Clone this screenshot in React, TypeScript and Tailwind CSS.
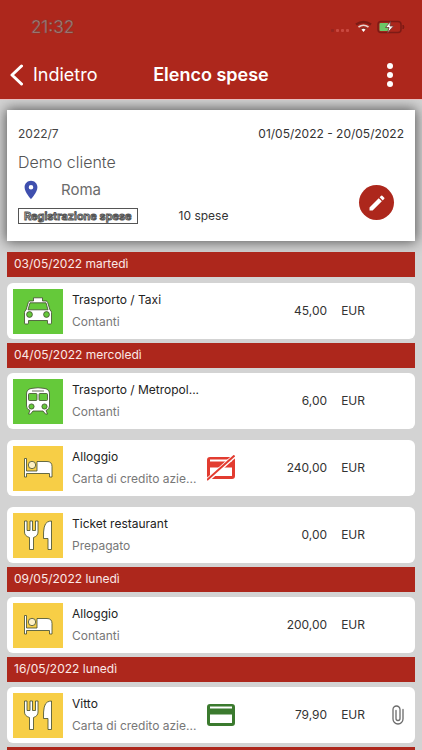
import React from 'react'
import { MdEdit, MdLocationOn } from 'react-icons/md'

type IconName = 'taxi' | 'train' | 'bed' | 'food'

type Expense = {
  icon: IconName
  title: string
  payment: string
  amount: string
  card?: 'ok' | 'off'
  attachment?: boolean
}

type Day = {
  date: string
  expenses: Expense[]
}

const days: Day[] = [
  {
    date: '03/05/2022 martedì',
    expenses: [{ icon: 'taxi', title: 'Trasporto / Taxi', payment: 'Contanti', amount: '45,00' }],
  },
  {
    date: '04/05/2022 mercoledì',
    expenses: [
      { icon: 'train', title: 'Trasporto / Metropol...', payment: 'Contanti', amount: '6,00' },
      { icon: 'bed', title: 'Alloggio', payment: 'Carta di credito azie...', amount: '240,00', card: 'off' },
      { icon: 'food', title: 'Ticket restaurant', payment: 'Prepagato', amount: '0,00' },
    ],
  },
  {
    date: '09/05/2022 lunedì',
    expenses: [{ icon: 'bed', title: 'Alloggio', payment: 'Contanti', amount: '200,00' }],
  },
  {
    date: '16/05/2022 lunedì',
    expenses: [
      { icon: 'food', title: 'Vitto', payment: 'Carta di credito azie...', amount: '79,90', card: 'ok', attachment: true },
    ],
  },
  { date: '', expenses: [] },
]

function CategoryIcon({ name }: { name: IconName }) {
  const green = name === 'taxi' || name === 'train'
  const hole = green ? '#65c93a' : '#f7ce46'
  return (
    <div className={`flex h-[45px] w-[50px] shrink-0 items-center justify-center ${green ? 'bg-[#65c93a]' : 'bg-[#f7ce46]'}`}>
      <svg width="30" height="30" viewBox="0 0 30 30" fill="#fff" stroke="#3f4a2c" strokeWidth="0.8" strokeLinejoin="round">
        {name === 'taxi' && (
          <>
            <path d="M10.500 5V1.800h9V5H23q1.200 0 1.600 1.200L27 14q1.500.8 1.500 2.500V27q0 1-1 1h-2q-1 0-1-1v-2.500h-19V27q0 1-1 1h-2q-1 0-1-1V16.500Q1.500 14.800 3 14L5.400 6.200Q5.800 5 7 5z" />
            <path d="M7 6.800h16l2 7H5z" fill={hole} />
            <circle cx="6.500" cy="18.500" r="2.900" fill={hole} />
            <circle cx="23.500" cy="18.500" r="2.900" fill={hole} />
          </>
        )}
        {name === 'train' && (
          <>
            <path d="M3.500 8q0-4.500 4.500-5.500 7-1.500 14 0 4.500 1 4.500 5.500v12q0 3.500-3.500 4.500l1.500 3.500h-2l-2.500-3h-10L7.500 28h-2L7 24.500q-3.500-1-3.500-4.500z" />
            <rect x="5.500" y="7.500" width="8.500" height="7" rx="1" fill={hole} />
            <rect x="16" y="7.500" width="8.500" height="7" rx="1" fill={hole} />
            <path d="M9 5h12" />
            <circle cx="8.500" cy="20.500" r="2.600" fill={hole} />
            <circle cx="21.500" cy="20.500" r="2.600" fill={hole} />
          </>
        )}
        {name === 'bed' && (
          <>
            <path d="M1.500 5.500h2V18H14V8.500h10q5 0 5 5v10.500h-2.500v-3.500h-23V24h-2z" />
            <circle cx="9" cy="12" r="3.700" fill="#fdf0c4" />
          </>
        )}
        {name === 'food' && (
          <>
            <path d="M1.500 1H4v9.500h3V1h2.500v9.500h3V1H15v11q0 4-4.500 5.500V29.500H6.500V17.500Q1.500 16 1.500 12z" />
            <path d="M28.500 1v28.500H25V18.500h-4.500Q20 4 24.500 2 26.500 1 28.500 1z" />
          </>
        )}
      </svg>
    </div>
  )
}

function CardIcon({ state }: { state: 'ok' | 'off' }) {
  const off = state === 'off'
  return (
    <svg width="28" height="26" viewBox="0 0 28 26" aria-label={off ? 'Carta non valida' : 'Carta'}>
      <path
        fill={off ? '#e23c30' : '#3b7a2e'}
        fillRule="evenodd"
        d="M3 2h22q3 0 3 3v16q0 3-3 3H3q-3 0-3-3V5q0-3 3-3zM3 4.500v2h22v-2zM3 12.500V21h22v-8.500z"
      />
      {off && (
        <>
          <path d="M0 25.500L28 .5" stroke="#fff" strokeWidth="4.200" />
          <path d="M0 25L27.500 .5" stroke="#e23c30" strokeWidth="2" />
        </>
      )}
    </svg>
  )
}

function StatusBar() {
  return (
    <div className="flex h-[50px] items-center justify-between pt-1 pr-[17px] pl-[31px]">
      <span className="text-[17px] leading-6 text-[#a98480] [-webkit-text-stroke:0.5px_#75453f]">21:32</span>
      <svg width="74" height="14" viewBox="0 0 74 14">
        <g fill="#c9483f">
          <rect x="0" y="9" width="3" height="3" rx="1" fill="#95251f" />
          <rect x="5" y="9" width="3" height="3" rx="1" />
          <rect x="10" y="9" width="3" height="3" rx="1" />
          <rect x="15" y="9" width="3" height="3" rx="1" />
        </g>
        <g fill="none">
          <path d="M25 4.500q7.500-5 15 0" stroke="#7d1b15" strokeWidth="2.500" />
          <path d="M27.500 7q5-3.500 10 0" stroke="#e5d5d2" strokeWidth="1.600" />
          <path d="M29.500 9q3-2 6 0" stroke="#6d3733" strokeWidth="1" />
        </g>
        <path d="M30.500 9.500q2-1.500 4 0l-2 2.500z" fill="#fff" />
        <rect x="47" y="1.500" width="23" height="11" rx="3" fill="none" stroke="#7d1b15" strokeWidth="1.500" />
        <rect x="48.500" y="3" width="9" height="8" rx="1" fill="#6cc867" />
        <path d="M72 5q2 2 0 4z" fill="#7d1b15" stroke="#7d1b15" />
        <path d="M59.500 1.500l-5 6h3.500L56.500 13l6-7H59z" fill="#fff" stroke="#6d3733" strokeWidth="0.800" />
      </svg>
    </div>
  )
}

function Header() {
  return (
    <header className="shrink-0 border-b border-[#e6bfc0] bg-[#ad271c] text-white">
      <StatusBar />
      <div className="grid h-[49px] grid-cols-[1fr_auto_1fr] items-center px-[10px]">
        <button className="flex items-center gap-[10px] text-lg">
          <svg width="13" height="22" viewBox="0 0 13 22" fill="none" stroke="#fff" strokeWidth="3" strokeLinecap="round" strokeLinejoin="round">
            <path d="M11.500 2L2 11l9.500 9" />
          </svg>
          Indietro
        </button>
        <h1 className="text-lg font-semibold">Elenco spese</h1>
        <button aria-label="Menu" className="justify-self-end px-[19px]">
          <svg width="6" height="24" viewBox="0 0 6 24" fill="#fff">
            <circle cx="3" cy="3" r="3" />
            <circle cx="3" cy="12" r="3" />
            <circle cx="3" cy="21" r="3" />
          </svg>
        </button>
      </div>
    </header>
  )
}

function Summary() {
  return (
    <section className="mt-[10px] flex h-[131px] flex-col bg-white px-[11px] pt-4 shadow-[0_0_12px_1px_#555]">
      <div className="flex justify-between text-xs leading-4 text-[#444]">
        <span>2022/7</span>
        <span className="text-[#333]">01/05/2022 - 20/05/2022</span>
      </div>
      <div className="flex items-end justify-between">
        <div>
          <h2 className="mt-2 text-base leading-6 font-light text-[#555]">Demo cliente</h2>
          <div className="mt-1 flex h-6 items-center gap-[19px] pl-[2px] text-[15px] text-[#6b6b6b]">
            <MdLocationOn className="h-[22px] w-[22px] text-[#3f4fae]" />
            Roma
          </div>
          <div className="mt-[6px] flex items-center gap-[41px]">
            <span className="border border-[#555] px-[5px] text-[11px] leading-[14px] font-semibold text-white [-webkit-text-stroke:1px_#555]">
              Registrazione spese
            </span>
            <span className="text-xs leading-4 text-[#333]">10 spese</span>
          </div>
        </div>
        <button aria-label="Modifica" className="mr-[10px] mb-1 flex h-[35px] w-[35px] items-center justify-center rounded-full bg-[#ad271c]">
          <MdEdit className="h-5 w-5 text-white" />
        </button>
      </div>
    </section>
  )
}

function ExpenseRow({ expense }: { expense: Expense }) {
  return (
    <li className="flex h-14 items-center rounded-md bg-white pr-[11px] pl-[6px]">
      <CategoryIcon name={expense.icon} />
      <div className="ml-[9px] w-[135px] shrink-0 text-xs whitespace-nowrap">
        <p className="leading-[22px] text-[#222]">{expense.title}</p>
        <p className="leading-[22px] text-[#777]">{expense.payment}</p>
      </div>
      <div className="w-[29px] shrink-0">{expense.card && <CardIcon state={expense.card} />}</div>
      <div className="flex flex-1 justify-end gap-[14px] text-xs text-[#333]">
        <span>{expense.amount}</span>
        <span>EUR</span>
      </div>
      <div className="flex w-[39px] shrink-0 justify-end">
        {expense.attachment && (
          <svg width="12" height="20" viewBox="0 0 12 20" fill="none" stroke="#6b6b6b" strokeWidth="1.300" strokeLinecap="round" aria-label="Allegato">
            <path d="M11 4.500V14a5 5 0 0 1-10 0V4.500a3.500 3.500 0 0 1 7 0V13.500a2 2 0 0 1-4 0V5.500" />
          </svg>
        )}
      </div>
    </li>
  )
}

function App() {
  return (
    <div className="flex h-screen flex-col bg-[#d3d3d3] font-['Inter',sans-serif]">
      <Header />
      <main className="flex-1 overflow-y-auto px-[7px] [scrollbar-width:none]">
        <Summary />
        <div className="mt-[11px]">
          {days.map((day, i) => (
            <section key={i}>
              <h3 className="h-[25px] bg-[#ad271c] pl-[7px] text-xs leading-6 text-[#fbe9e7]">{day.date}</h3>
              <ul className={`flex flex-col gap-[11px] pb-1 ${i === 0 ? 'pt-[6px]' : 'pt-[5px]'}`}>
                {day.expenses.map((expense) => (
                  <ExpenseRow key={expense.title} expense={expense} />
                ))}
              </ul>
            </section>
          ))}
        </div>
      </main>
    </div>
  )
}

export default App
